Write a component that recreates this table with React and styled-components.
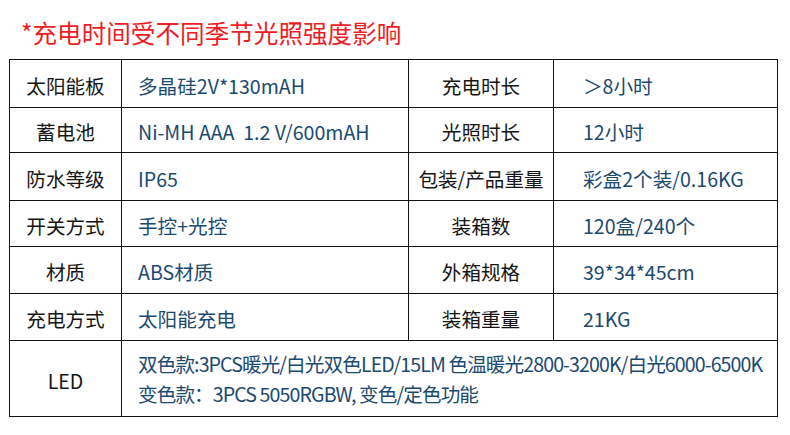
import React from 'react';
import styled, { createGlobalStyle } from 'styled-components';

const GlobalStyle = createGlobalStyle`
    html, body {
        margin: 0;
        padding: 0;
        background: #ffffff;
    }
    body {
        font-family: "Noto Sans CJK SC", "Noto Sans", sans-serif;
    }
`;

const Page = styled.div`
    width: 790px;
    height: 435px;
    background: #ffffff;
    padding: 16px 0 0 9px;
    box-sizing: border-box;
    overflow: hidden;
`;

const Notice = styled.div`
    color: #ee1c25;
    font-size: 24.6px;
    line-height: 32px;
    padding-left: 12px;
    margin-bottom: 11px;
`;

const Grid = styled.div`
    display: grid;
    grid-template-columns: 112px 287px 145px 224px;
    grid-template-rows: 48px 45px 48px 46px 47px 47px 76px;
    width: 769px;
    border-top: 1px solid #111;
    border-left: 1px solid #111;
    box-sizing: border-box;
`;

const Cell = styled.div`
    border-right: 1px solid #111;
    border-bottom: 1px solid #111;
    display: flex;
    align-items: center;
    justify-content: ${(p) => (p.$label ? 'center' : 'flex-start')};
    padding-left: ${(p) => (p.$label ? '0' : p.$pad || '16px')};
    padding-top: 3px;
    font-size: 19.6px;
    color: ${(p) => (p.$label ? '#151515' : '#1b4a6f')};
    grid-column: ${(p) => p.$span || 'auto'};
    white-space: nowrap;
`;

const Lines = styled.div`
    display: flex;
    flex-direction: column;
    line-height: 30px;
    letter-spacing: -0.9px;
    margin-top: -3px;
`;

const rows = [
    ['太阳能板', '多晶硅2V*130mAH', '充电时长', '＞8小时'],
    ['蓄电池', 'Ni-MH AAA  1.2 V/600mAH', '光照时长', '12小时'],
    ['防水等级', 'IP65', '包装/产品重量', '彩盒2个装/0.16KG'],
    ['开关方式', '手控+光控', '装箱数', '120盒/240个'],
    ['材质', 'ABS材质', '外箱规格', '39*34*45cm'],
    ['充电方式', '太阳能充电', '装箱重量', '21KG'],
];

const App = () => {
    return (
        <Page>
            <GlobalStyle />
            <Notice>*充电时间受不同季节光照强度影响</Notice>
            <Grid>
                {rows.map((r) => (
                    <React.Fragment key={r[0]}>
                        <Cell $label>{r[0]}</Cell>
                        <Cell style={{ whiteSpace: 'pre' }}>{r[1]}</Cell>
                        <Cell $label>{r[2]}</Cell>
                        <Cell $pad="29px">{r[3]}</Cell>
                    </React.Fragment>
                ))}
                <Cell $label>LED</Cell>
                <Cell $span="2 / 5">
                    <Lines>
                        <span>双色款:3PCS暖光/白光双色LED/15LM 色温暖光2800-3200K/白光6000-6500K</span>
                        <span>变色款：3PCS 5050RGBW, 变色/定色功能</span>
                    </Lines>
                </Cell>
            </Grid>
        </Page>
    );
};

export default App;
